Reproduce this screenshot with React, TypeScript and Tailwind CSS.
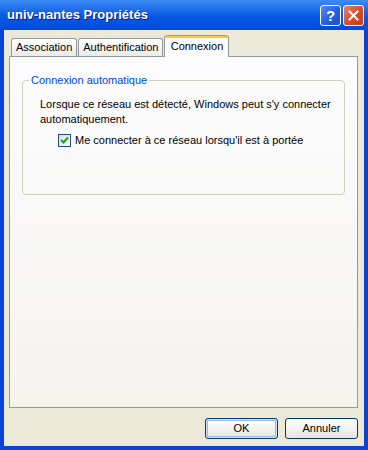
const font = "font-['Liberation_Sans',Tahoma,sans-serif]";

function Tab({ label, active }: { label: string; active?: boolean }) {
  if (active) {
    return (
      <div className="relative z-10 -mb-[1px] ml-[1px] flex h-[22px] w-[65px] flex-col rounded-t-[3px] border-x border-[#919B9C] bg-[#FCFCFE]">
        <div className="h-[3px] rounded-t-[3px] border-t border-[#E68B2C] bg-[#FFC73C]" />
        <div className="pt-[2px] text-center text-[11px] leading-[13px] text-black">{label}</div>
      </div>
    );
  }
  return (
    <div className="flex h-[18px] items-center rounded-t-[3px] border border-b-0 border-[#919B9C] bg-gradient-to-b from-white to-[#ECEBE6] px-[4px] text-[11px] leading-[13px] text-black">
      {label}
    </div>
  );
}

function Button({ label, primary }: { label: string; primary?: boolean }) {
  return (
    <div
      className={`flex h-[21px] w-[73px] items-center justify-center rounded-[3px] border border-[#003C74] bg-gradient-to-b from-white to-[#E6E5DE] text-[11px] text-black ${
        primary ? "shadow-[inset_0_0_0_1px_#CEE7FF,inset_0_0_0_2px_#98B8EA]" : ""
      }`}
    >
      {label}
    </div>
  );
}

export default function App() {
  return (
    <div className={`${font} flex h-[450px] w-[368px] flex-col bg-[#0844D8]`}>
      {/* title bar */}
      <div className="flex h-[30px] items-center bg-gradient-to-b from-[#3D8BF5] via-[#0A5BE6] to-[#0349DB] pl-[7px] pr-[4px]">
        <span className="flex-1 text-[13px] font-bold text-white [text-shadow:1px_1px_0_#0A1883]">
          univ-nantes Propriétés
        </span>
        <div className="flex gap-[2px]">
          <div className="flex h-[21px] w-[21px] items-center justify-center rounded-[3px] border border-white bg-gradient-to-br from-[#5A8CF5] via-[#2663E0] to-[#1B4ED0] text-[15px] font-bold leading-none text-white">
            ?
          </div>
          <div className="flex h-[21px] w-[21px] items-center justify-center rounded-[3px] border border-white bg-gradient-to-br from-[#E5826A] via-[#D6502E] to-[#C13A1A]">
            <svg width="11" height="11" viewBox="0 0 11 11">
              <path d="M1.5 1.5 L9.5 9.5 M9.5 1.5 L1.5 9.5" stroke="white" strokeWidth="2" strokeLinecap="square" />
            </svg>
          </div>
        </div>
      </div>

      {/* body */}
      <div className="mx-[4px] mb-[4px] flex flex-1 flex-col bg-[#ECE9D8]">
        <div className="flex flex-col pl-[5px] pt-[5px]">
          <div className="flex items-end pl-[2px]">
            <Tab label="Association" />
            <div className="ml-[1px]">
              <Tab label="Authentification" />
            </div>
            <Tab label="Connexion" active />
          </div>
          <div className="flex h-[352px] w-[349px] flex-col border border-[#919B9C] bg-gradient-to-b from-[#FCFCFE] to-[#F4F3EE] px-[12px] pt-[17px]">
            <fieldset className="h-[121px] rounded-[4px] border border-[#D0D0BF] pl-[17px] pr-[2px]">
              <legend className="ml-[-11px] px-[2px] text-[11px] leading-[13px] text-[#0046D5]">
                Connexion automatique
              </legend>
              <p className="mt-[10px] text-[11px] leading-[15px] text-black">
                Lorsque ce réseau est détecté, Windows peut s'y connecter automatiquement.
              </p>
              <div className="mt-[7px] flex items-center gap-[4px] pl-[18px]">
                <div className="flex h-[13px] w-[13px] items-center justify-center border border-[#1C5180] bg-gradient-to-br from-[#DCDCD7] to-white">
                  <svg width="9" height="9" viewBox="0 0 9 9">
                    <path d="M1 4 L3.5 6.5 L8 1.5" fill="none" stroke="#21A121" strokeWidth="2" />
                  </svg>
                </div>
                <span className="text-[11px] leading-[13px] text-black">Me connecter à ce réseau lorsqu'il est à portée</span>
              </div>
            </fieldset>
          </div>
        </div>
        <div className="flex flex-1 items-center justify-end gap-[7px] pr-[6px] pt-[3px]">
          <Button label="OK" primary />
          <Button label="Annuler" />
        </div>
      </div>
    </div>
  );
}
